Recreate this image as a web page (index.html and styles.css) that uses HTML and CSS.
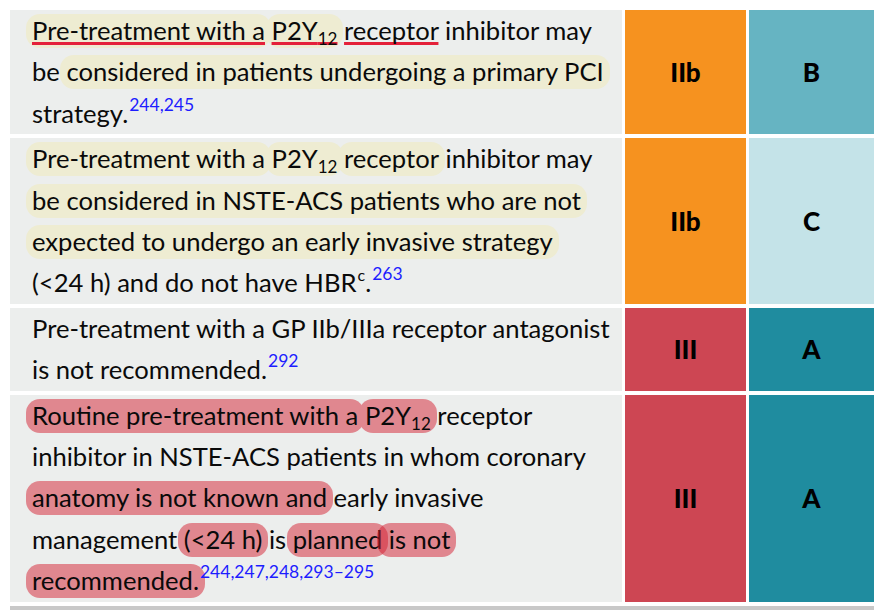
FILE: index.html
```html
<!DOCTYPE html>
<html>
<head>
<meta charset="utf-8">
<link rel="stylesheet" href="styles.css">
</head>
<body>
<div class="page">
  <div class="table">
    <div class="txt">
      <span class="hl y"><span class="ul">Pre-treatment with a</span></span> <span class="hl y"><span class="ul">P2Y<sub>12</sub></span></span> <span class="ul">receptor</span> inhibitor may<br>
      be <span class="hl y">considered in patients undergoing a primary PCI</span><br>
      strategy.<sup class="ref">244,245</sup>
    </div>
    <div class="cell orange">IIb</div>
    <div class="cell teal-b">B</div>

    <div class="txt">
      <span class="hl y">Pre-treatment with a</span> <span class="hl y">P2Y<sub>12</sub></span> <span class="hl y">receptor</span> inhibitor may<br>
      <span class="hl y">be considered in NSTE-ACS patients who are not</span><br>
      <span class="hl y">expected to undergo an early invasive strategy</span><br>
      (&lt;24 h) and do not have HBR<sup class="note">c</sup>.<sup class="ref">263</sup>
    </div>
    <div class="cell orange">IIb</div>
    <div class="cell teal-c">C</div>

    <div class="txt">
      Pre-treatment with a GP IIb/IIIa receptor antagonist<br>
      is not recommended.<sup class="ref">292</sup>
    </div>
    <div class="cell red">III</div>
    <div class="cell teal-a">A</div>

    <div class="txt">
      <span class="hl p">Routine pre-treatment with a</span> <span class="hl p">P2Y<sub>12</sub></span> receptor<br>
      inhibitor in NSTE-ACS patients in whom coronary<br>
      <span class="hl p">anatomy is not known and</span> early invasive<br>
      management <span class="hl p">(&lt;24 h)</span> is <span class="hl p">planned</span> <span class="hl pt">is not</span><br>
      <span class="hl p">recommended.</span><sup class="ref">244,247,248,293–295</sup>
    </div>
    <div class="cell red">III</div>
    <div class="cell teal-a">A</div>
  </div>
  <div class="bottom-bar"></div>
</div>
</body>
</html>
```
FILE: styles.css
```css
html, body {
  margin: 0;
  padding: 0;
  background: #ffffff;
}

.page {
  padding: 10px 0 0 10px;
}

.table {
  display: grid;
  grid-template-columns: 612px 121px 125px;
  column-gap: 3px;
  row-gap: 4px;
  width: 864px;
}

.txt {
  background: #eceeed;
  padding: 0 0 0 22px;
  font-family: Lato, "Noto Sans", sans-serif;
  font-size: 25.6px;
  line-height: 41.4px;
  color: #0a0a0a;
  white-space: nowrap;
}

.hl {
  padding: 1px 6px 3px;
  margin: 0 -6px;
  border-radius: 14px;
}

.hl.y { background: #eeecd2; }
.hl.p { background: #e0878f; }
.hl.pt {
  background: rgba(212, 30, 49, 0.5);
  padding-left: 12px;
  margin-left: -12px;
}

.ul {
  text-decoration: underline;
  text-decoration-color: #e4213a;
  text-decoration-thickness: 3px;
  text-underline-offset: 2px;
  text-decoration-skip-ink: none;
}

sub {
  font-size: 17px;
  vertical-align: -5px;
  line-height: 0;
}

sup {
  line-height: 0;
}

sup.ref {
  font-size: 17.5px;
  vertical-align: 12px;
  color: #1d1dff;
  margin-left: 1px;
}

sup.note {
  font-size: 16px;
  vertical-align: 11px;
  margin-left: 1px;
}

.cell {
  display: flex;
  align-items: center;
  justify-content: center;
  font-family: Lato, "Noto Sans", sans-serif;
  font-weight: 900;
  font-size: 26px;
  color: #000;
}

.orange { background: #f6921f; }
.teal-b { background: #66b4c2; }
.teal-c { background: #c4e3e8; }
.red { background: #cd4653; }
.teal-a { background: #1f8c9f; }

.bottom-bar {
  margin-top: 4px;
  width: 864px;
  height: 10px;
  background: #c8c8c8;
}
```
